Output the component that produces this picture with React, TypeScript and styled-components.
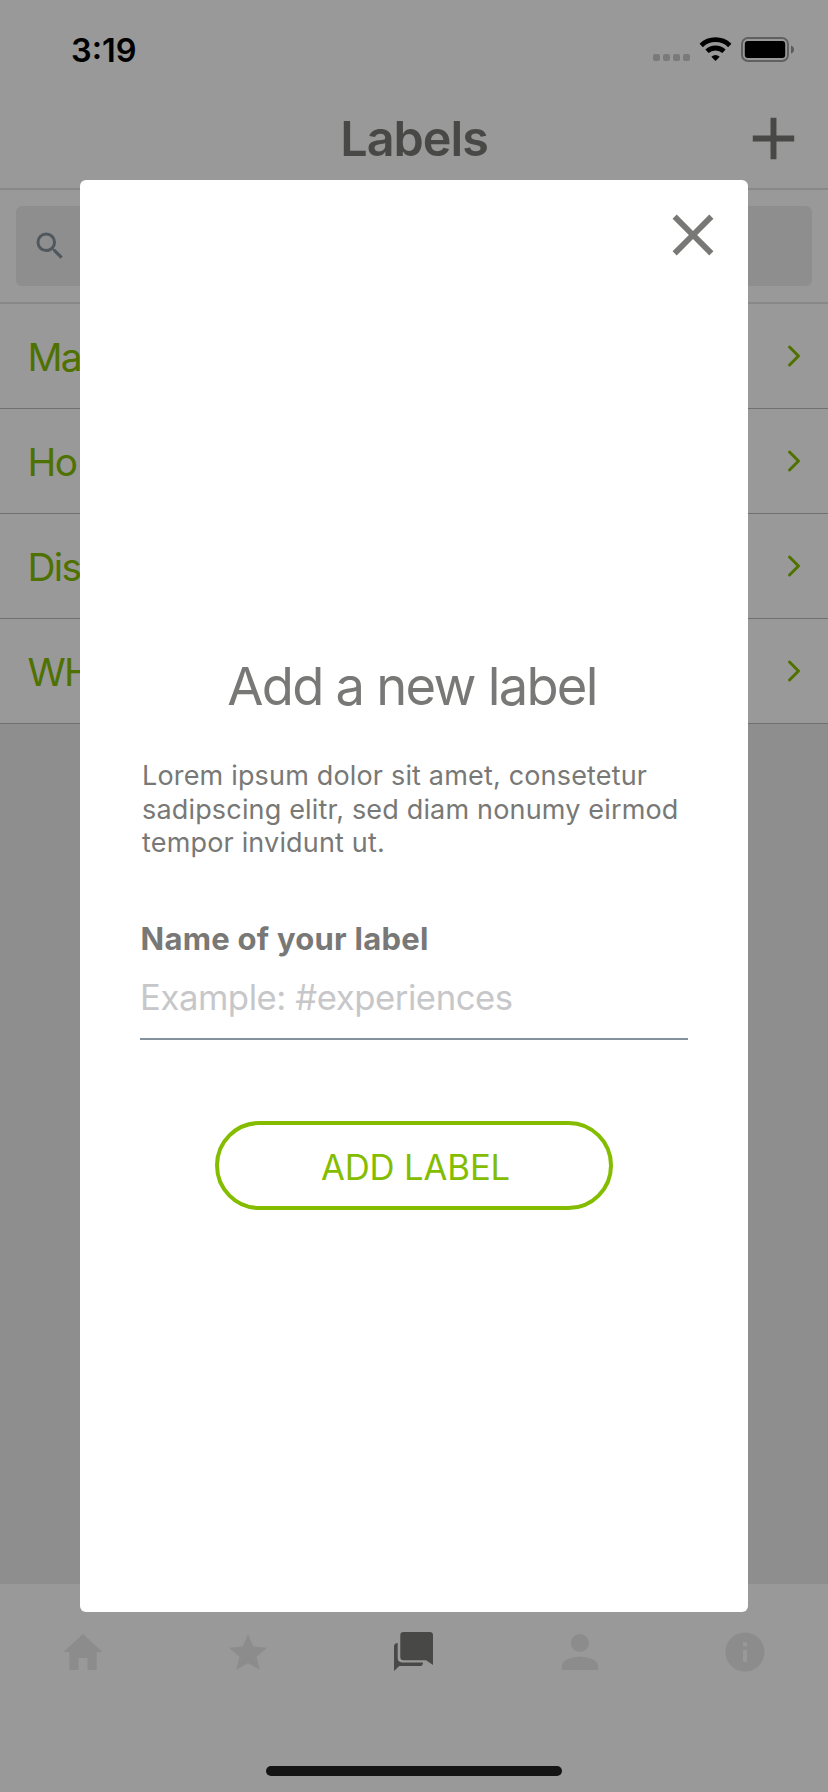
import React from 'react';
import styled, { createGlobalStyle } from 'styled-components';
import { IoMdHome, IoMdStar, IoMdPerson, IoMdInformationCircle } from 'react-icons/io';
import { MdSearch, MdAdd, MdClose } from 'react-icons/md';
import { FiChevronRight } from 'react-icons/fi';

const GlobalStyle = createGlobalStyle`
  * { box-sizing: border-box; }
  body { margin: 0; background: #fff; font-family: Inter, "Liberation Sans", sans-serif; }
  svg { display: block; flex: none; }
`;

const Screen = styled.div`
  position: relative;
  display: flex;
  flex-direction: column;
  width: 828px;
  height: 1792px;
  overflow: hidden;
  background: #ededed;
`;

const StatusBar = styled.div`
  display: flex;
  align-items: center;
  justify-content: space-between;
  height: 88px;
  padding: 12px 34px 0 71px;
  background: #fff;
`;

const Clock = styled.span`
  padding-top: 2px;
  font-size: 32.5px;
  font-weight: 600;
  line-height: 40px;
  color: #000;
`;

const Header = styled.header`
  display: grid;
  grid-template-columns: 90px 1fr 90px;
  align-items: center;
  height: 102px;
  border-bottom: 2px solid #e3e3e3;
  background: #fff;
  color: #787876;
`;

const HeaderTitle = styled.h1`
  grid-column: 2;
  margin: 0;
  padding-top: 2px;
  font-size: 48.5px;
  font-weight: 600;
  line-height: 60px;
  letter-spacing: -1px;
  text-align: center;
`;

const SearchBar = styled.div`
  height: 114px;
  padding: 16px 16px 0;
  border-bottom: 2px solid #e3e3e3;
  background: #fff;
`;

const SearchField = styled.div`
  display: flex;
  align-items: center;
  height: 80px;
  padding: 0 16px;
  border-radius: 6px;
  background: #ededed;
  color: #84929e;
`;

const LabelList = styled.ul`
  flex: 1;
  margin: 0;
  padding: 0;
  list-style: none;
`;

const LabelRow = styled.li`
  display: flex;
  align-items: center;
  justify-content: space-between;
  height: 105px;
  padding: 0 16px 0 27.5px;
  border-bottom: 1px solid #bbb;
  background: #fff;
  font-size: 38.8px;
  letter-spacing: -1.7px;
  color: #84bd00;
`;

const TabBar = styled.nav`
  display: grid;
  grid-template-columns: repeat(5, 1fr);
  height: 208px;
  padding-top: 44px;
  background: #fff;
`;

const Tab = styled.div<{ $active?: boolean }>`
  display: flex;
  justify-content: center;
  color: ${(p) => (p.$active ? '#787876' : '#eaeaea')};
`;

const Overlay = styled.div`
  position: absolute;
  inset: 0;
  padding: 180px 80px;
  background: rgba(0, 0, 0, 0.4);
`;

const Dialog = styled.section`
  display: flex;
  flex-direction: column;
  height: 1432px;
  padding: 20px 60px 0;
  border-radius: 6px;
  background: #fff;
  color: #787876;
`;

const CloseButton = styled.div`
  align-self: flex-end;
  height: 70px;
  margin-right: -40px;
`;

const DialogTitle = styled.h2`
  margin: 384px 0 0;
  padding-right: 4px;
  font-size: 52.5px;
  font-weight: 400;
  line-height: 64px;
  letter-spacing: -1.75px;
  text-align: center;
  white-space: nowrap;
`;

const Description = styled.p`
  margin: 41px 0 0;
  padding-left: 2px;
  font-size: 27px;
  line-height: 33.6px;
  letter-spacing: 0.17px;
  white-space: nowrap;
`;

const FieldLabel = styled.label`
  margin-top: 59px;
  padding-left: 0.5px;
  font-size: 31px;
  font-weight: 700;
  line-height: 40px;
  letter-spacing: 0.25px;
`;

const FieldInput = styled.div`
  height: 81.2px;
  padding-top: 16px;
  border-bottom: 2px solid #84929e;
  font-size: 34.7px;
  line-height: 44px;
  letter-spacing: -0.45px;
  color: #c7c7c9;
`;

const SubmitButton = styled.div`
  display: flex;
  align-items: center;
  justify-content: center;
  align-self: center;
  width: 398px;
  height: 89px;
  margin-top: 81px;
  padding: 4px 0 0 3px;
  border: 4px solid #84bd00;
  border-radius: 45px;
  font-size: 34.7px;
  letter-spacing: -0.15px;
  color: #84bd00;
`;

const HomeIndicator = styled.div`
  position: absolute;
  left: 266px;
  bottom: 16px;
  width: 296px;
  height: 10px;
  border-radius: 5px;
  background: #141414;
`;

const StatusIcons = () => (
  <svg width="141" height="26" viewBox="0 0 141 26">
    {[0, 10, 20, 30].map((x) => (
      <rect key={x} x={x} y="17" width="7" height="7" rx="2" fill="#cbcbcb" />
    ))}
    <g fill="none" stroke="#000" strokeWidth="4.8">
      <path d="M48.2 8.4a20.8 20.8 0 0 1 28.6 0" />
      <path d="M54 14.3a12.6 12.6 0 0 1 17 0" />
    </g>
    <path d="M62.5 24l-4.2-4.3q4.2-3.4 8.4 0z" fill="#000" />
    <rect x="89" y="1" width="46" height="23" rx="6" fill="none" stroke="#a0a0a0" strokeWidth="2" />
    <rect x="91.8" y="4" width="40.4" height="17" rx="3" fill="#000" />
    <path d="M138 8.5q3 1 3 4t-3 4z" fill="#989898" />
  </svg>
);

const ChatsIcon = ({ size }: { size: number }) => (
  <svg width={size} height={size} viewBox="0 0 48 48" fill="currentColor">
    <path d="M13.500 4H39.800q3.200 0 3.200 3.200V37l-7-4.800H13.500q-3.200 0-3.200-3.200V7.200q0-3.200 3.200-3.200z" />
    <path d="M4 43V18.500q0-3.500 3.700-3.500V30q0 4.400 4.400 4.400H33q0 3.600-3.400 3.600H9.300z" />
  </svg>
);

const labels = ['Ma', 'Ho', 'Dis', 'WH'];

const tabs = [
  { name: 'home', Icon: IoMdHome },
  { name: 'favourites', Icon: IoMdStar },
  { name: 'chats', Icon: ChatsIcon, active: true },
  { name: 'profile', Icon: IoMdPerson },
  { name: 'info', Icon: IoMdInformationCircle },
];

export default function App() {
  return (
    <Screen>
      <GlobalStyle />
      <StatusBar>
        <Clock>3:19</Clock>
        <StatusIcons />
      </StatusBar>
      <Header>
        <HeaderTitle>Labels</HeaderTitle>
        <MdAdd size={71} />
      </Header>
      <SearchBar>
        <SearchField>
          <MdSearch size={36} />
        </SearchField>
      </SearchBar>
      <LabelList>
        {labels.map((label) => (
          <LabelRow key={label}>
            <span>{label}</span>
            <FiChevronRight size={36} />
          </LabelRow>
        ))}
      </LabelList>
      <TabBar>
        {tabs.map(({ name, Icon, active }) => (
          <Tab key={name} $active={active}>
            <Icon size={48} />
          </Tab>
        ))}
      </TabBar>
      <Overlay>
        <Dialog>
          <CloseButton>
            <MdClose size={70} />
          </CloseButton>
          <DialogTitle>Add a new label</DialogTitle>
          <Description>
            Lorem ipsum dolor sit amet, consetetur
            <br />
            sadipscing elitr, sed diam nonumy eirmod
            <br />
            tempor invidunt ut.
          </Description>
          <FieldLabel>Name of your label</FieldLabel>
          <FieldInput>Example: #experiences</FieldInput>
          <SubmitButton>ADD LABEL</SubmitButton>
        </Dialog>
      </Overlay>
      <HomeIndicator />
    </Screen>
  );
}
